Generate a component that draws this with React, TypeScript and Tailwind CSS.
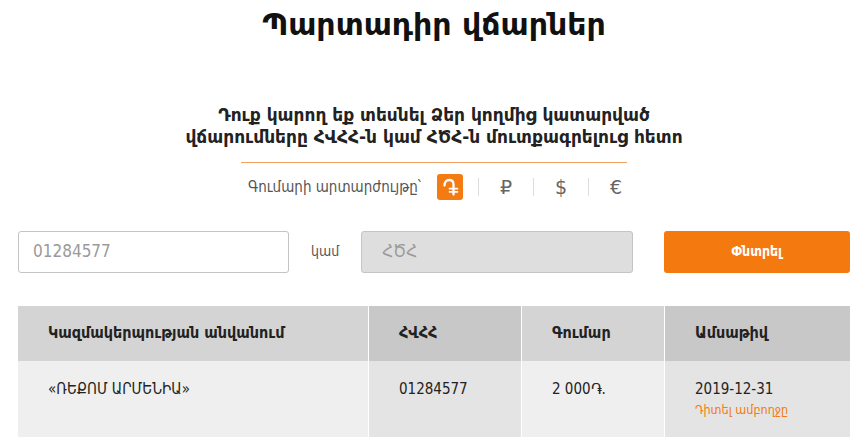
import React from "react";

const armenian = "font-['DejaVu_Sans',sans-serif]";
const condensed = "font-['DejaVu_Sans_Condensed','DejaVu_Sans',sans-serif]";

const DramIcon = () => (
  <svg width="26" height="26" viewBox="0 0 26 26" fill="none" stroke="white" strokeLinecap="round">
    <path d="M7.5 11.5 C7.5 7.8 9.8 6 12.3 6 C14.8 6 16.5 7.8 16.5 10.5 V20.5" strokeWidth="2.3" />
    <path d="M12.5 14.6 H20.5 M12.5 17.8 H20.5" strokeWidth="1.7" />
  </svg>
);

const Divider = () => <span className="mx-[15px] h-[18px] w-px bg-[#ddd]"></span>;

const CurrencyRow = () => (
  <div className="mt-[10px] flex items-center justify-center pl-[8px]">
    <span className={`${condensed} text-[15px] text-[#555]`}>Գումարի արտարժույթը՝</span>
    <span className="ml-[16px] flex h-[26px] w-[26px] items-center justify-center rounded-[3px] bg-[#f47a12]">
      <DramIcon />
    </span>
    <Divider />
    <span className="w-[24px] text-center text-[19px] text-[#666]">₽</span>
    <Divider />
    <span className="w-[24px] text-center text-[19px] text-[#666]">$</span>
    <Divider />
    <span className="w-[24px] text-center text-[19px] text-[#666]">€</span>
  </div>
);

const App = () => {
  return (
    <div className={`${armenian} h-[446px] w-[868px] overflow-hidden bg-white`}>
      <h1 className="pt-[6px] text-center text-[30px] font-bold leading-[38px] text-[#111]">
        Պարտադիր վճարներ
      </h1>

      <div className="mt-[60px] text-center text-[17px] font-bold leading-[22px] text-[#222]">
        <p>Դուք կարող եք տեսնել Ձեր կողմից կատարված</p>
        <p>վճարումները ՀՎՀՀ-ն կամ ՀԾՀ-ն մուտքագրելուց հետո</p>
      </div>

      <div className="mx-auto mt-[14px] h-px w-[386px] bg-[#f0a060]"></div>

      <CurrencyRow />

      <div className="mx-[18px] mt-[29px] flex items-center">
        <div className={`${condensed} flex h-[42px] w-[272px] items-center rounded-[3px] border border-[#c4c4c4] bg-white px-[14px] text-[17px] text-[#9a9a9a]`}>
          01284577
        </div>
        <span className={`${condensed} w-[72px] text-center text-[14px] text-[#555]`}>կամ</span>
        <div className={`${condensed} flex h-[42px] w-[272px] items-center rounded-[3px] border border-[#c4c4c4] bg-[#dedede] px-[20px] text-[17px] text-[#9a9a9a]`}>
          ՀԾՀ
        </div>
        <button className={`${condensed} ml-[31px] h-[42px] w-[187px] rounded-[3px] bg-[#f47a0f] text-[14px] font-bold text-white`}>
          Փնտրել
        </button>
      </div>

      <div className={`${condensed} mx-[18px] mt-[33px] grid grid-cols-[350px_152px_142px_1fr] gap-x-px bg-white text-[15px] text-[#222]`}>
        <div className="flex h-[55px] items-center bg-[#d4d4d4] pl-[30px] text-[16px] font-bold">Կազմակերպության անվանում</div>
        <div className="flex h-[55px] items-center bg-[#c8c8c8] pl-[30px] text-[16px] font-bold">ՀՎՀՀ</div>
        <div className="flex h-[55px] items-center bg-[#d4d4d4] pl-[30px] text-[16px] font-bold">Գումար</div>
        <div className="flex h-[55px] items-center bg-[#c8c8c8] pl-[30px] text-[16px] font-bold">Ամսաթիվ</div>

        <div className="h-[76px] bg-[#efefef] pl-[30px] pt-[17px]">«ՌԵՔՈՄ ԱՐՄԵՆԻԱ»</div>
        <div className="h-[76px] bg-[#e4e4e4] pl-[30px] pt-[17px]">01284577</div>
        <div className="h-[76px] bg-[#efefef] pl-[30px] pt-[17px]">2 000֏.</div>
        <div className="h-[76px] bg-[#e4e4e4] pl-[30px] pt-[17px]">
          <div>2019-12-31</div>
          <div className="mt-[1px] text-[12.5px] text-[#f47a0f]">Դիտել ամբողջը</div>
        </div>
      </div>
    </div>
  );
};

export default App;
